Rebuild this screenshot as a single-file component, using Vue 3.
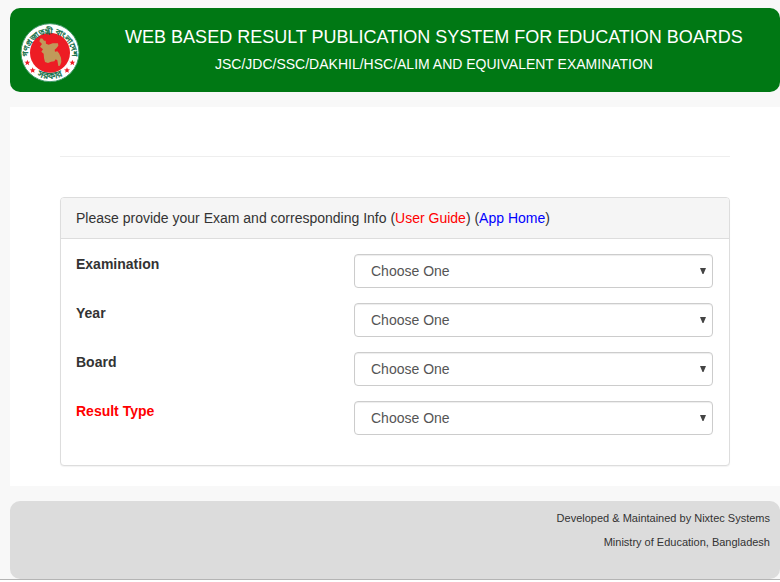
<script setup>
import { reactive } from "vue";

const fields = [
  { id: 'exam', label: 'Examination' },
  { id: 'year', label: 'Year' },
  { id: 'board', label: 'Board' },
  { id: 'result_type', label: 'Result Type', important: true }
]

const form = reactive({
  exam: '',
  year: '',
  board: '',
  result_type: ''
})
</script>

<template>
<div class="page">
  <header class="header">
    <svg class="logo" viewBox="0 0 180 180" role="img" aria-label="Government seal">
      <defs>
        <path id="arcTop" d="M24 98 A66 66 0 1 1 156 98" />
        <path id="arcBottom" d="M11 89 A79 79 0 0 0 169 89" />
        <path id="star" d="M0 -9 L2.4 -3 L9 -2.8 L3.8 1.3 L5.6 7.5 L0 3.9 L-5.6 7.5 L-3.8 1.3 L-9 -2.8 L-2.4 -3 Z" />
      </defs>
      <circle cx="90" cy="89" r="87" fill="#fff" stroke="#3f9a68" stroke-width="3" />
      <circle cx="90" cy="89" r="60" fill="#ed1c24" />
      <path
        class="map"
        d="M62 46 L68 47 L72 53 L77 53 L78 62 L86 65 L98 61 L114 61 L115 68 L109 76 L104 80 L105 86 L112 85 L117 91 L123 104 L124 117 L120 128 L115 129 L112 112 L107 109 L103 115 L93 116 L84 120 L75 117 L72 105 L71 92 L64 86 L69 79 L60 71 L66 63 L58 55 Z"
      />
      <use href="#star" x="22" y="119" fill="#ed1c24" />
      <use href="#star" x="38" y="142" fill="#ed1c24" />
      <use href="#star" x="141" y="142" fill="#ed1c24" />
      <use href="#star" x="157" y="119" fill="#ed1c24" />
      <text class="sealText"><textPath href="#arcTop" startOffset="50%">গণপ্রজাতন্ত্রী বাংলাদেশ</textPath></text>
      <text class="sealText bottom"><textPath href="#arcBottom" startOffset="50%">সরকার</textPath></text>
    </svg>
    <div class="titles">
      <h1>WEB BASED RESULT PUBLICATION SYSTEM FOR EDUCATION BOARDS</h1>
      <h2>JSC/JDC/SSC/DAKHIL/HSC/ALIM AND EQUIVALENT EXAMINATION</h2>
    </div>
  </header>

  <main class="content">
    <hr>
    <form class="panel" @submit.prevent>
      <div class="panelHeading">
        Please provide your Exam and corresponding Info (<a class="guide" href="#guide">User Guide</a>) (<a class="home" href="#home">App Home</a>)
      </div>
      <div class="panelBody">
        <div class="row" v-for="field in fields" :key="field.id">
          <label :for="field.id" :class="{ important: field.important }">{{field.label}}</label>
          <div class="selectBox">
            <select :id="field.id" v-model="form[field.id]">
              <option value="">Choose One</option>
            </select>
            <svg class="arrow" viewBox="0 0 6 6" aria-hidden="true">
              <path d="M0 0 H6 L3.5 6 H2.5 Z" />
            </svg>
          </div>
        </div>
      </div>
    </form>
  </main>

  <footer class="footer">
    <div>Developed &amp; Maintained by Nixtec Systems</div>
    <div>Ministry of Education, Bangladesh</div>
  </footer>
</div>
</template>

<style>
body {
  background-color: #fff;
}
</style>

<style scoped>
* {
  box-sizing: border-box;
}

.page {
  display: flex;
  flex-direction: column;
  gap: 15px;
  padding: 8px 0 0 10px;
  font-family: "Liberation Sans", Arial, sans-serif;
  font-size: 14px;
  line-height: 20px;
  color: #333;
  background-color: #f8f8f8;
  border-bottom: 1px solid #b4b4b4;
}

.header {
  display: flex;
  align-items: flex-start;
  padding: 15px 0 9px 10px;
  border-radius: 10px;
  color: #fff;
  background-color: #007814;
}

.logo {
  flex: none;
  width: 60px;
  height: 60px;
}

.map {
  fill: #c1995a;
}

.sealText {
  font-family: "Noto Sans Bengali", "Noto Sans", sans-serif;
  font-size: 24px;
  text-anchor: middle;
  fill: #14704a;
  stroke: #14704a;
  stroke-width: 1px;
}

.sealText.bottom {
  font-size: 28px;
}

.titles {
  flex: 1;
  padding-left: 8px;
  text-align: center;
}

.titles h1 {
  margin: 0;
  font-size: 18px;
  font-weight: 400;
  line-height: 28px;
}

.titles h2 {
  margin: 0;
  font-size: 14px;
  font-weight: 400;
  line-height: 26px;
}

.content {
  padding: 49px 50px 20px;
  background-color: #fff;
}

hr {
  margin: 0 0 40px;
  border: 0;
  border-top: 1px solid #eee;
}

.panel {
  border: 1px solid #ddd;
  border-radius: 4px;
  background-color: #fff;
  box-shadow: 0 1px 1px rgba(0, 0, 0, 0.05);
}

.panelHeading {
  padding: 10px 15px;
  border-bottom: 1px solid #ddd;
  border-radius: 3px 3px 0 0;
  background-color: #f5f5f5;
}

.panelHeading a {
  text-decoration: none;
}

.guide {
  color: #f00;
}

.home {
  color: #00f;
}

.panelBody {
  display: flex;
  flex-direction: column;
  gap: 15px;
  padding: 15px 16px 30px 15px;
}

.row {
  display: grid;
  grid-template-columns: 278px 1fr;
  align-items: start;
}

.row label {
  justify-self: start;
  font-weight: bold;
}

.row .important {
  color: #f00;
}

.selectBox {
  position: relative;
}

select {
  display: block;
  width: 100%;
  height: 34px;
  padding: 6px 16px;
  font-family: inherit;
  font-size: 14px;
  line-height: 20px;
  color: #555;
  background-color: #fff;
  border: 1px solid #ccc;
  border-radius: 4px;
  box-shadow: inset 0 1px 1px rgba(0, 0, 0, 0.075);
  appearance: none;
}

.arrow {
  position: absolute;
  top: 14px;
  right: 7px;
  width: 6px;
  height: 6px;
  fill: #444;
  pointer-events: none;
}

.footer {
  padding: 5px 10px 25px;
  border-radius: 10px;
  font-size: 11px;
  line-height: 24px;
  text-align: right;
  background-color: #dcdcdc;
}
</style>
